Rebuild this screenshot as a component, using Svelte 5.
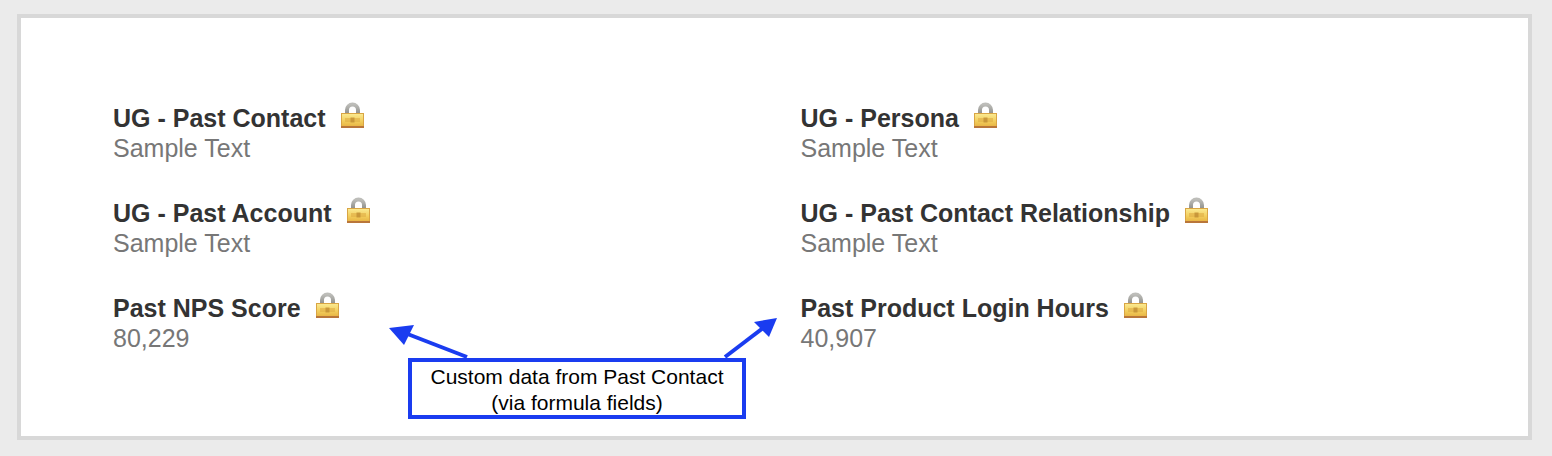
<script>
	const fields = [
		{ label: 'UG - Past Contact', value: 'Sample Text' },
		{ label: 'UG - Persona', value: 'Sample Text' },
		{ label: 'UG - Past Account', value: 'Sample Text' },
		{ label: 'UG - Past Contact Relationship', value: 'Sample Text' },
		{ label: 'Past NPS Score', value: '80,229' },
		{ label: 'Past Product Login Hours', value: '40,907' }
	];
</script>

<main>
	<div class="frame">
		<svg class="defs" width="0" height="0" aria-hidden="true">
			<defs>
				<linearGradient id="lock-body" x1="0" y1="0" x2="0" y2="1">
					<stop offset="0" stop-color="#fbeb93" />
					<stop offset="0.55" stop-color="#f2cd5c" />
					<stop offset="1" stop-color="#e6b040" />
				</linearGradient>
				<linearGradient id="lock-shackle" x1="0" y1="0" x2="0" y2="1">
					<stop offset="0" stop-color="#bdbdb9" />
					<stop offset="1" stop-color="#8f8f8b" />
				</linearGradient>
			</defs>
		</svg>

		<div class="grid">
			{#each fields as field}
				<div class="field">
					<div class="label">
						{field.label}
						<svg class="lock" viewBox="0 0 23 28" width="23" height="28" aria-hidden="true">
							<path d="M6 13V9a5.5 5.5 0 0 1 11 0v4" fill="none" stroke="url(#lock-shackle)" stroke-width="4" />
							<rect x="0.5" y="12.5" width="22" height="14" fill="url(#lock-body)" stroke="#d9a544" />
							<rect x="0" y="25" width="23" height="2" fill="#b9763a" />
							<rect x="4" y="17" width="15" height="4" fill="#e0ae45" opacity="0.6" />
							<rect x="9.5" y="16.5" width="4" height="5" fill="#c08f35" opacity="0.8" />
						</svg>
					</div>
					<div class="value">{field.value}</div>
				</div>
			{/each}
		</div>

		<svg class="arrows" viewBox="0 0 1552 456" width="1552" height="456" aria-hidden="true">
			<line x1="467" y1="357" x2="405" y2="333" stroke="#1a3cf0" stroke-width="4" />
			<polygon points="389,328 414,325 404,345" fill="#1a3cf0" />
			<line x1="725" y1="357" x2="763" y2="328" stroke="#1a3cf0" stroke-width="4" />
			<polygon points="777,318 754,322 769,337" fill="#1a3cf0" />
		</svg>

		<div class="callout">Custom data from Past Contact<br />(via formula fields)</div>
	</div>
</main>

<style>
	:global(body) {
		margin: 0;
		background: #ebebeb;
	}
	main {
		height: 456px;
		padding: 14px 20px 16px 17px;
		box-sizing: border-box;
		font-family: 'Liberation Sans', Arial, sans-serif;
	}
	.frame {
		position: relative;
		height: 100%;
		box-sizing: border-box;
		border: 4px solid #d8d8d8;
		background: #fff;
		padding: 86px 0 0 92px;
	}
	.defs {
		position: absolute;
	}
	.grid {
		display: grid;
		grid-template-columns: 687.5px 1fr;
		grid-auto-rows: 95px;
	}
	.label {
		display: flex;
		align-items: center;
		gap: 15px;
		height: 29px;
		font-size: 25px;
		font-weight: bold;
		color: #333;
	}
	.lock {
		margin-top: -8px;
	}
	.value {
		height: 30px;
		line-height: 30px;
		font-size: 25px;
		color: #777;
	}
	.arrows {
		position: absolute;
		left: -21px;
		top: -18px;
		pointer-events: none;
	}
	.callout {
		position: absolute;
		left: 387px;
		top: 340px;
		width: 338px;
		height: 61px;
		box-sizing: border-box;
		border: 4px solid #1a3cf0;
		background: #fff;
		color: #000;
		font-size: 21px;
		line-height: 26px;
		text-align: center;
		padding-top: 2px;
	}
</style>
